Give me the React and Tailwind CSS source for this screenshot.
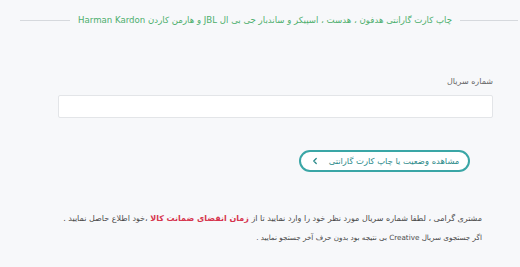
import React from "react";
import { ChevronLeft } from "lucide-react";

export default function App() {
  return (
    <div
      dir="rtl"
      className="w-[520px] h-[267px] overflow-hidden bg-[#f7f8fa] text-[#555]"
      style={{ fontFamily: '"DejaVu Sans", "Noto Sans", sans-serif' }}
    >
      {/* TITLE */}
      <div className="flex items-center gap-[8px] pt-[13px] pl-[20px] pr-[2px]">
        <div className="h-px w-[58px] bg-[#d6d9dd]" />
        <h1 className="whitespace-nowrap text-[8.6px] leading-[14px] text-[#4cae6c]">
          چاپ کارت گارانتی هدفون ، هدست ، اسپیکر و ساندبار جی بی ال JBL و هارمن کاردن Harman Kardon
        </h1>
        <div className="h-px flex-1 bg-[#d6d9dd]" />
      </div>

      {/* FORM */}
      <div className="mr-[27px] ml-[58px] mt-[49px]">
        <label className="block text-[8px] leading-[12px] text-[#666]">شماره سریال</label>
        <input
          type="text"
          className="mt-[7px] block h-[23px] w-full rounded-[2px] border border-[#e3e5e8] bg-white px-2 text-[11px] outline-none"
        />
      </div>

      <div className="mr-[50px] mt-[32px] flex">
        <button className="flex h-[22px] w-[171px] items-center justify-center gap-[9px] whitespace-nowrap rounded-full border-2 border-[#3aa6a6] bg-white text-[8.4px] text-[#2b8a8a]">
          <span>مشاهده وضعیت یا چاپ کارت گارانتی</span>
          <ChevronLeft size={10} strokeWidth={3} />
        </button>
      </div>

      {/* NOTES */}
      <div className="mr-[38px] mt-[40px] ml-[20px]">
        <p className="whitespace-nowrap text-[8px] leading-[14px] text-[#4a4a4a]">
          مشتری گرامی ، لطفا شماره سریال مورد نظر خود را وارد نمایید تا از{" "}
          <b className="text-[#d6344d]">زمان انقضای ضمانت کالا</b> ،خود اطلاع حاصل نمایید .
        </p>
        <p className="mt-[6px] whitespace-nowrap text-[7.2px] leading-[12px] text-[#4a4a4a]">
          اگر جستجوی سریال Creative بی نتیجه بود بدون حرف آخر جستجو نمایید .
        </p>
      </div>
    </div>
  );
}
